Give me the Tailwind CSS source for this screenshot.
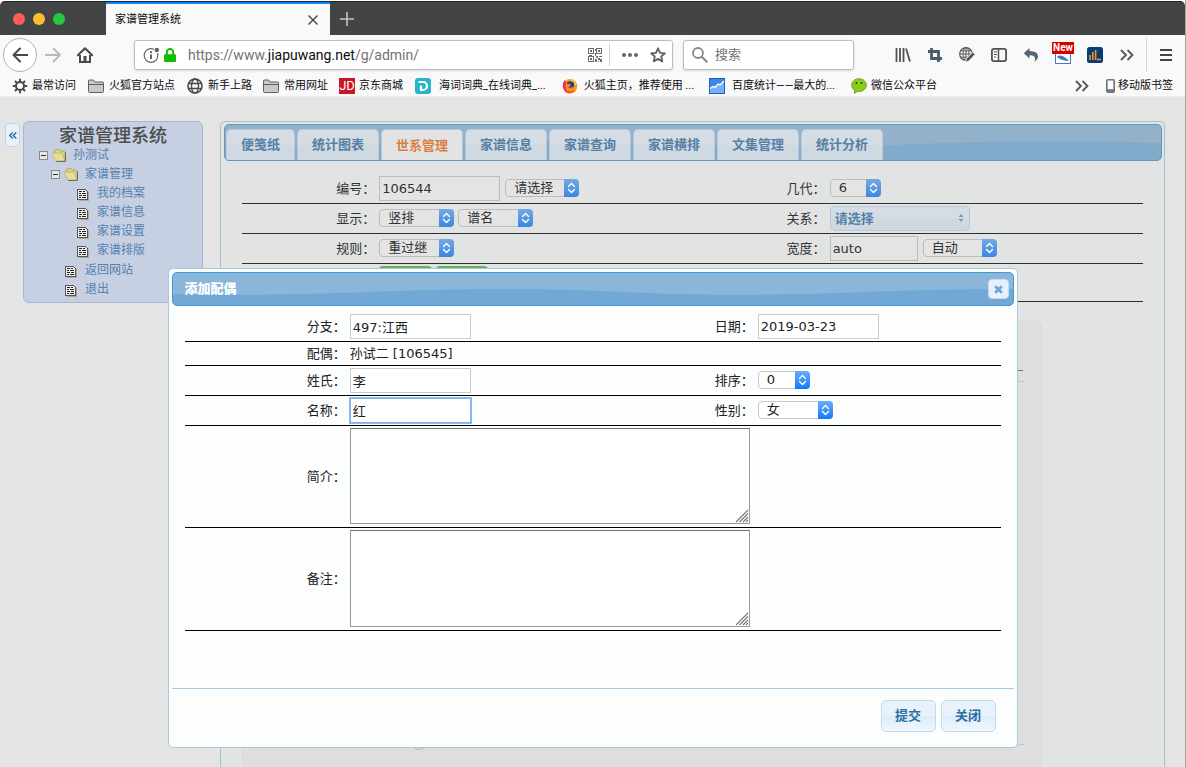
<!DOCTYPE html>
<html lang="zh-CN">
<head>
  <meta charset="UTF-8" />
  <meta name="viewport" content="width=device-width, initial-scale=1.0" />
  <title>家谱管理系统</title>
  <script src="https://cdn.jsdelivr.net/npm/@tailwindcss/browser@4"></script>
</head>
<body class="relative flex h-screen flex-col overflow-hidden border-r border-[#a3a3a3] bg-[#e4e4e4] font-['DejaVu_Sans','Noto_Sans_CJK_SC',sans-serif] text-[13px] leading-5 text-[#333]">

  <!-- Iconos compartidos -->
  <svg class="absolute size-0" aria-hidden="true">
    <defs>
      <symbol id="updown" viewBox="0 0 15 18">
        <path d="M4.5 7.5l3-3 3 3M4.5 10.5l3 3 3-3" fill="none" stroke="#fff" stroke-width="1.4" stroke-linecap="round" stroke-linejoin="round" />
      </symbol>
      <symbol id="minus" viewBox="0 0 9 9">
        <rect x=".5" y=".5" width="8" height="8" fill="#e6e6e6" stroke="#8a8a8a" />
        <path d="M2 4.5h5" stroke="#333" />
      </symbol>
      <symbol id="folder-open" viewBox="0 0 15 13">
        <path d="M2.500 1.500L4 .5h3l1.500 1.500h3.500l1 1v9H4z" fill="#d8d386" stroke="#a19c5a" stroke-width=".7" />
        <path d="M.5 4h9.500l3 8H4L1 7z" fill="#e4de96" stroke="#b9b367" stroke-width=".8" />
        <path d="M13.500 3.500v9H4.500" fill="none" stroke="#6c6b55" />
      </symbol>
      <symbol id="doc" viewBox="0 0 12 12">
        <g shape-rendering="crispEdges">
          <path d="M2 11.500h9.500V3" fill="none" stroke="#a8a894" />
          <path d="M.5.5h8l2 2v8h-10z" fill="#f0f0f0" stroke="#555" />
          <path d="M2 2.500h3M6 2.500h2M2 4.500h2M5 4.500h4M2 6.500h3M6 6.500h3M2 8.500h2M5 8.500h4" stroke="#222" />
        </g>
      </symbol>
      <symbol id="folder" viewBox="0 0 16 14">
        <path d="M.5 12.500V2q0-1 1-1h4l1.500 2h7.500q1 0 1 1v8.500q0 1-1 1h-13q-1 0-1-1z" fill="#c9c9cb" stroke="#606062" />
        <path d="M1 5.500h14" stroke="#606062" />
      </symbol>
      <symbol id="grip" viewBox="0 0 14 14">
        <path d="M1 13L13 1M4.500 13L13 4.500M8 13l5-5M11 13l2-2" stroke="#777" stroke-width="1.100" fill="none" />
      </symbol>
      <symbol id="more" viewBox="0 0 14 12">
        <path d="M1 1l5 5-5 5M7.500 1l5 5-5 5" fill="none" stroke="#555" stroke-width="1.800" />
      </symbol>
      <pattern id="wave" width="500" height="100" patternUnits="userSpaceOnUse">
        <path d="M0 21C40 22 90 22 130 21C200 19 260 16 330 16C400 16 450 19 500 21V100H0z" fill="#4b94cc" fill-opacity=".4" />
      </pattern>
    </defs>
  </svg>

  <!-- Barra de titulo -->
  <div class="bg-white pt-px">
    <div class="flex h-[34px] items-stretch rounded-t-[5px] border-t border-[#1f2222] bg-[#434446]">
      <div class="flex w-[106px] items-center gap-2 pl-[13px]">
        <span class="size-3 rounded-full bg-[#ff5c54]"></span>
        <span class="size-3 rounded-full bg-[#fdbd2e]"></span>
        <span class="size-3 rounded-full bg-[#27c83f]"></span>
      </div>
      <div class="flex w-[224px] items-center justify-between border-t-2 border-[#0a84ff] bg-[#f9f9fa] pr-3 pl-[9px] text-[11px] text-[#0c0c0d]">
        <span>家谱管理系统</span>
        <button type="button" aria-label="关闭标签页">
          <svg class="size-[10px]" viewBox="0 0 10 10"><path d="M.5.5l9 9M9.500.5l-9 9" stroke="#444" stroke-width="1.400" /></svg>
        </button>
      </div>
      <button type="button" aria-label="新标签页" class="pl-[10px]">
        <svg class="size-[14px]" viewBox="0 0 14 14"><path d="M7 0v14M0 7h14" stroke="#c4c4c5" stroke-width="1.600" /></svg>
      </button>
    </div>
  </div>

  <!-- Navegacion -->
  <div class="flex h-10 items-center bg-[#f9f9fa] pl-[3px]">
    <button type="button" aria-label="后退" class="flex size-[34px] items-center justify-center rounded-full border border-[#b1b1b3] bg-white">
      <svg class="size-4" viewBox="0 0 16 16"><path d="M15.500 8H1.500M8 1.500L1.500 8 8 14.500" fill="none" stroke="#48484a" stroke-width="2" stroke-linejoin="round" stroke-linecap="round" /></svg>
    </button>
    <button type="button" aria-label="前进" class="ml-2">
      <svg class="size-4" viewBox="0 0 16 16"><path d="M.5 8h14M8.500 1.500L15 8l-6.500 6.500" fill="none" stroke="#b9b9bb" stroke-width="1.800" stroke-linejoin="round" stroke-linecap="round" /></svg>
    </button>
    <button type="button" aria-label="主页" class="ml-4">
      <svg class="size-4" viewBox="0 0 16 16"><path d="M.8 8.300L8 1.200l7.200 7.100" fill="none" stroke="#48484a" stroke-width="2" stroke-linecap="round" stroke-linejoin="round" /><path d="M3 8v7h10V8" fill="none" stroke="#48484a" stroke-width="2" /><path d="M6.500 9h3v6h-3z" fill="#48484a" /></svg>
    </button>

    <div class="ml-[41px] flex h-[30px] min-w-0 flex-1 items-center rounded-[3px] border border-[#bcbcbe] bg-white shadow-sm">
      <svg class="ml-2 size-[17px] shrink-0" viewBox="0 0 17 17"><circle cx="8" cy="8.500" r="6.800" fill="none" stroke="#666" stroke-width="1.200" /><path d="M8 7.500v4.500" stroke="#555" stroke-width="1.800" /><circle cx="8" cy="5.200" r="1.100" fill="#555" /><circle cx="13.800" cy="3" r="3.200" fill="#fff" /><circle cx="13.800" cy="3" r="2.300" fill="#666" /></svg>
      <svg class="ml-1 h-[14px] w-3 shrink-0" viewBox="0 0 12 14"><path d="M2.800 7V4.200a3.200 3.200 0 016.400 0V7" fill="none" stroke="#12bc00" stroke-width="2" /><rect y="6.200" width="12" height="7.800" rx="1" fill="#12bc00" /></svg>
      <div class="ml-3 min-w-0 flex-1 truncate font-['Roboto',sans-serif] text-[14px] text-[#737373]">https://www.<span class="text-[#0c0c0d]">jiapuwang.net</span>/g/admin/</div>
      <svg class="size-[14px] shrink-0" viewBox="0 0 14 14" shape-rendering="crispEdges"><path d="M.5.5h5v5h-5zM8.500.5h5v5h-5zM.5 8.500h5v5h-5z" fill="none" stroke="#6b6b70" /><path d="M2 2h2v2H2zM10 2h2v2h-2zM2 10h2v2H2zM7 1h1v2H7zM7 5h1v3H7zM8 8h2v2H8zM11 8h3v1h-3zM10 10h2v2h-2zM12 11h2v3h-2zM7 11h2v3H7zM10 13h1v1h-1zM1 7h3v1H1z" fill="#6b6b70" /></svg>
      <span class="ml-[7px] h-[22px] w-px bg-[#d0d0d2]"></span>
      <svg class="ml-3 h-1 w-4 shrink-0" viewBox="0 0 16 4"><circle cx="2" cy="2" r="2" fill="#666" /><circle cx="8" cy="2" r="2" fill="#666" /><circle cx="14" cy="2" r="2" fill="#666" /></svg>
      <svg class="mr-[6px] ml-3 size-4 shrink-0" viewBox="0 0 16 16"><path d="M8 1.300l2 4.500 4.900.5-3.700 3.200 1.100 4.900L8 11.900l-4.300 2.500 1.100-4.900L1.100 6.300l4.900-.5z" fill="none" stroke="#606062" stroke-width="1.800" stroke-linejoin="round" /></svg>
    </div>

    <label class="ml-[10px] flex h-[30px] w-[171px] items-center rounded-[3px] border border-[#bcbcbe] bg-white pl-2 shadow-sm">
      <svg class="size-4 shrink-0" viewBox="0 0 16 16"><circle cx="6" cy="6" r="5" fill="none" stroke="#8a8a8c" stroke-width="1.800" /><path d="M9.800 9.800l5.500 5.500" stroke="#8a8a8c" stroke-width="2.200" /></svg>
      <input type="text" aria-label="搜索" placeholder="搜索" class="ml-[7px] w-full min-w-0 bg-transparent text-[13px] outline-none placeholder:text-[#757575]" />
    </label>

    <div class="ml-[33px] grid grid-cols-[repeat(8,32px)] place-items-center">
      <svg class="size-4" viewBox="0 0 16 16"><path d="M1.500 1v14M5 1v14M8.500 1v14M11 1.500l4 13" stroke="#525254" stroke-width="1.800" fill="none" /></svg>
      <svg class="size-4" viewBox="0 0 16 16"><path d="M4.500 1v10.500h10.500M1 4.500h10.500v10.500" fill="none" stroke="#4b5a6a" stroke-width="2.800" /></svg>
      <svg class="size-4" viewBox="0 0 16 16"><circle cx="7" cy="7" r="6.300" fill="none" stroke="#555" stroke-width="1.200" /><ellipse cx="7" cy="7" rx="3" ry="6.300" fill="none" stroke="#555" /><path d="M.7 7h12.500M1.800 3.800h10.400M1.800 10.200h8M7 .5v13" stroke="#555" /><path d="M14 4.500l-6.500 7-1.500 4 4-1.500 6-6.500z" fill="#555" stroke="#f9f9fa" /></svg>
      <svg class="size-4" viewBox="0 0 16 16"><rect x=".9" y="1.900" width="14.200" height="12.200" rx="2" fill="none" stroke="#525254" stroke-width="1.800" /><path d="M7.500 2v12" stroke="#525254" stroke-width="1.500" /><path d="M3 5h3M3 7.500h3M3 10h2" stroke="#525254" /></svg>
      <svg class="size-4" viewBox="0 0 16 16"><path d="M6.500 1L.8 6.200l5.700 5.300V8.400c4.500-.4 6.500 1.600 5 6.600 5.500-4 5-10.800-5-10.900z" fill="#566575" /></svg>
      <span class="flex w-6 flex-col items-center pb-[5px]">
        <span class="bg-[#d90000] px-px font-['Roboto',sans-serif] text-[10px] leading-3 font-bold text-white">New</span>
        <svg class="h-[10px] w-4" viewBox="0 0 16 10"><path d="M.5 0v9.500h15V0" fill="#fff" stroke="#3b7dba" /><path d="M2 2.500Q5 .5 8.500 2.500T14 7Q9 6.500 6 5.500T2 2.500z" fill="#3b7dba" /></svg>
      </span>
      <svg class="size-4" viewBox="0 0 16 16"><rect width="16" height="16" rx="2.500" fill="#0a3d78" /><path d="M3 13V8M5.800 13V5M8.600 13V3" stroke="#f39a1e" stroke-width="1.600" /><path d="M10 12.500h4" stroke="#f39a1e" stroke-width="1.500" /></svg>
      <svg class="h-3 w-[14px]"><use href="#more" /></svg>
    </div>
    <span class="ml-[3px] h-[34px] w-px bg-[#d8d8da]"></span>
    <button type="button" aria-label="菜单" class="mr-[13px] ml-[13px]">
      <svg class="h-3 w-3" viewBox="0 0 12 12"><path d="M0 1h12M0 6h12M0 11h12" stroke="#444" stroke-width="2" /></svg>
    </button>
  </div>

  <!-- Marcadores -->
  <div class="flex h-[22px] shrink-0 items-center border-b border-[#ececec] bg-[#f9f9fa] pl-3 font-['Roboto','Noto_Sans_CJK_SC',sans-serif] text-[11px] whitespace-nowrap text-[#0c0c0d]">
    <a href="#" class="mr-3 flex items-center gap-1">
      <svg class="size-4" viewBox="0 0 16 16"><circle cx="8" cy="8" r="4" fill="none" stroke="#48484a" stroke-width="2" /><path d="M8 .8v3M8 12.200v3M.8 8h3M12.200 8h3M2.900 2.900L5 5M11 11l2.100 2.100M2.900 13.100L5 11M11 5l2.100-2.100" stroke="#48484a" stroke-width="1.900" /></svg>最常访问</a>
    <a href="#" class="mr-3 flex items-center gap-[5px]"><svg class="h-[14px] w-4"><use href="#folder" /></svg>火狐官方站点</a>
    <a href="#" class="mr-[11px] flex items-center gap-[5px]">
      <svg class="size-4" viewBox="0 0 16 16"><circle cx="8" cy="8" r="7" fill="none" stroke="#48484a" stroke-width="1.600" /><ellipse cx="8" cy="8" rx="3.500" ry="7" fill="none" stroke="#48484a" stroke-width="1.300" /><path d="M1.500 5.500h13M1.500 10.500h13" stroke="#48484a" stroke-width="1.300" /></svg>新手上路</a>
    <a href="#" class="mr-[11px] flex items-center gap-[5px]"><svg class="h-[14px] w-4"><use href="#folder" /></svg>常用网址</a>
    <a href="#" class="mr-3 flex items-center gap-1">
      <span class="flex size-4 items-center justify-center bg-[#c91623] text-[13px] text-white">JD</span>京东商城</a>
    <a href="#" class="mr-4 flex items-center gap-2">
      <svg class="size-4" viewBox="0 0 16 16"><rect width="16" height="16" rx="3" fill="#27b5c9" /><path d="M3.500 4H8a4 4 0 010 8H6V7.500" fill="none" stroke="#fff" stroke-width="2.200" /></svg>海词词典_在线词典_...</a>
    <a href="#" class="mr-[15px] flex items-center gap-[6px]">
      <svg class="size-4" viewBox="0 0 16 16"><circle cx="8" cy="8.300" r="7.300" fill="#ff9a1f" /><path d="M1 5Q0 13 7 15.500 2 10 4 4L3 2z" fill="#f0246a" /><path d="M2 13q6 5 12-1l-5 1z" fill="#ff4b2e" /><path d="M8 1.500Q13 2 14 7l-1 1z" fill="#ffd83a" /><circle cx="8.300" cy="7.200" r="4" fill="#25408f" /><path d="M4 6q3-1 5 1-1 2-3 2 3 2 6-1-1 5-5 4-4-1-3-6z" fill="#ff8a16" /></svg>火狐主页，推荐使用 ...</a>
    <a href="#" class="mr-4 flex items-center gap-[7px]">
      <svg class="size-4" viewBox="0 0 16 16"><rect x=".5" y=".5" width="15" height="15" fill="#3f87e6" stroke="#1f5fc4" /><path d="M1 11l3-2 2 1 3-4 2 1 4-4v12H1z" fill="#77b0f5" /><path d="M1 10.500l3-2 2 1 3-3.500 2 1 4-4" fill="none" stroke="#fff" stroke-width="1.400" /></svg>百度统计——最大的...</a>
    <a href="#" class="flex items-center gap-1">
      <svg class="size-4" viewBox="0 0 16 16"><path d="M8 .7c4.200 0 7.300 2.900 7.300 6.500S12.200 13.500 8 13.500l-1.500-.1L3.500 15.300l.3-2.900C1.800 11.200.7 9.300.7 7.200.7 3.600 3.800.7 8 .7z" fill="#8ccb1d" stroke="#5c9311" stroke-width=".8" /><circle cx="5.500" cy="5" r="1" fill="#234" /><circle cx="10.500" cy="5" r="1" fill="#234" /></svg>微信公众平台</a>
    <span class="ml-auto"><svg class="h-3 w-[14px]"><use href="#more" /></svg></span>
    <a href="#" class="mr-3 ml-[17px] flex items-center gap-[3px]">
      <svg class="h-[14px] w-[9px]" viewBox="0 0 9 14"><rect x=".8" y=".8" width="7.400" height="12.400" rx="1.200" fill="#fff" stroke="#6d7278" stroke-width="1.600" /><path d="M1 11.500h7" stroke="#6d7278" stroke-width="2.500" /></svg>移动版书签</a>
  </div>

  <!-- Pagina -->
  <div class="flex min-h-0 flex-1 items-start overflow-hidden pt-6 pr-5 pl-[5px]">
    <button type="button" aria-label="收起" class="mt-[2px] flex h-6 w-[15px] items-center justify-center rounded border border-[#c0d6e8] bg-[#e6f1fb]">
      <svg class="h-[7px] w-2" viewBox="0 0 8 7"><path d="M3.800.5l-3 3 3 3M7.300.5l-3 3 3 3" fill="none" stroke="#2e6e9e" stroke-width="1.400" /></svg>
    </button>

    <aside class="ml-[3px] h-[182px] w-[180px] shrink-0 rounded-md border border-[#a1b8d9] bg-[#c6d0e2] pt-[3px]">
      <h1 class="text-center text-[18px] leading-[21px] font-medium text-[#4c4c4c]">家谱管理系统</h1>
      <ul class="pl-[15px] text-[12px] leading-[19px] text-[#5580b0]">
        <li>
          <a href="#" class="flex h-[19px] items-center"><svg class="mr-1 size-[9px]"><use href="#minus" /></svg><svg class="mr-[6px] h-[13px] w-[15px]"><use href="#folder-open" /></svg>孙测试</a>
          <ul class="pl-3">
            <li>
              <a href="#" class="flex h-[19px] items-center"><svg class="mr-1 size-[9px]"><use href="#minus" /></svg><svg class="mr-[6px] h-[13px] w-[15px]"><use href="#folder-open" /></svg>家谱管理</a>
              <ul class="pb-px pl-[26px]">
                <li><a href="#" class="flex h-[19px] items-center gap-2"><svg class="mt-[3px] size-3"><use href="#doc" /></svg>我的档案</a></li>
                <li><a href="#" class="flex h-[19px] items-center gap-2"><svg class="mt-[3px] size-3"><use href="#doc" /></svg>家谱信息</a></li>
                <li><a href="#" class="flex h-[19px] items-center gap-2"><svg class="mt-[3px] size-3"><use href="#doc" /></svg>家谱设置</a></li>
                <li><a href="#" class="flex h-[19px] items-center gap-2"><svg class="mt-[3px] size-3"><use href="#doc" /></svg>家谱排版</a></li>
              </ul>
            </li>
            <li><a href="#" class="flex h-[19px] items-center gap-2 pl-[14px]"><svg class="mt-[3px] size-3"><use href="#doc" /></svg>返回网站</a></li>
            <li><a href="#" class="flex h-[19px] items-center gap-2 pl-[14px]"><svg class="mt-[3px] size-3"><use href="#doc" /></svg>退出</a></li>
          </ul>
        </li>
      </ul>
    </aside>

    <main class="ml-[17px] min-w-0 flex-1 rounded-[5px] border border-[#a6bfd3] bg-[#e1e4e3] p-[2px] pl-[3px]">
      <!-- Pestañas -->
      <nav class="relative flex h-[37px] items-stretch gap-[2px] overflow-hidden rounded-[5px] border border-[#6396bd] bg-[#93b2ca] pt-1 pl-px text-[13px] font-bold text-[#5480a5]">
        <svg class="absolute inset-0 h-full w-full opacity-60"><rect width="100%" height="100%" fill="url(#wave)" /></svg>
        <a href="#" class="relative flex items-center rounded-t-[5px] border border-b-0 border-[#bccbda] bg-linear-to-b from-[#d6dce4] from-50% to-[#cfd9e2] to-50% px-[14px]">便笺纸</a>
        <a href="#" class="relative flex items-center rounded-t-[5px] border border-b-0 border-[#bccbda] bg-linear-to-b from-[#d6dce4] from-50% to-[#cfd9e2] to-50% px-[14px]">统计图表</a>
        <a href="#" class="relative -mb-px flex items-center rounded-t-[5px] border border-b-0 border-[#b0cadc] bg-[#e2e4e4] px-[14px] text-[#dc7d43]">世系管理</a>
        <a href="#" class="relative flex items-center rounded-t-[5px] border border-b-0 border-[#bccbda] bg-linear-to-b from-[#d6dce4] from-50% to-[#cfd9e2] to-50% px-[14px]">家谱信息</a>
        <a href="#" class="relative flex items-center rounded-t-[5px] border border-b-0 border-[#bccbda] bg-linear-to-b from-[#d6dce4] from-50% to-[#cfd9e2] to-50% px-[14px]">家谱查询</a>
        <a href="#" class="relative flex items-center rounded-t-[5px] border border-b-0 border-[#bccbda] bg-linear-to-b from-[#d6dce4] from-50% to-[#cfd9e2] to-50% px-[14px]">家谱横排</a>
        <a href="#" class="relative flex items-center rounded-t-[5px] border border-b-0 border-[#bccbda] bg-linear-to-b from-[#d6dce4] from-50% to-[#cfd9e2] to-50% px-[14px]">文集管理</a>
        <a href="#" class="relative flex items-center rounded-t-[5px] border border-b-0 border-[#bccbda] bg-linear-to-b from-[#d6dce4] from-50% to-[#cfd9e2] to-50% px-[14px]">统计分析</a>
      </nav>

      <div class="pt-[13px] pr-[19px] pl-[18px]">
        <table class="w-full table-fixed border-separate border-spacing-0">
          <colgroup><col class="w-[15%]" /><col class="w-[35%]" /><col class="w-[15%]" /><col class="w-[35%]" /></colgroup>
          <tbody>
            <tr class="h-[30px]">
              <td class="border-b border-[#2e2e2e] px-[2px] text-right"><label for="bianhao">编号：</label></td>
              <td class="border-b border-[#2e2e2e] px-[2px]">
                <div class="flex items-center gap-[5px]">
                  <input id="bianhao" type="text" value="106544" class="h-[25px] w-[121px] border border-[#bcbcbc] bg-[#e4e4e4] px-[2px]" />
                  <div class="relative mb-px h-[18px] w-[74px]">
                    <select aria-label="选择" class="block h-full w-full appearance-none rounded-[4px] border border-[#bdbdbd] bg-[#e4e4e4] pl-2 leading-4"><option>请选择</option></select>
                    <svg class="pointer-events-none absolute top-0 right-0 h-[18px] w-[15px] rounded-r-[4px] bg-linear-to-b from-[#75a9e0] to-[#3a86e3]"><use href="#updown" /></svg>
                  </div>
                </div>
              </td>
              <td class="border-b border-[#2e2e2e] px-[2px] text-right"><label for="jidai">几代：</label></td>
              <td class="border-b border-[#2e2e2e] px-[2px]">
                <div class="relative mb-px h-[18px] w-[51px]">
                  <select id="jidai" class="block h-full w-full appearance-none rounded-[4px] border border-[#bdbdbd] bg-[#e4e4e4] pl-2 leading-4"><option>6</option></select>
                  <svg class="pointer-events-none absolute top-0 right-0 h-[18px] w-[15px] rounded-r-[4px] bg-linear-to-b from-[#75a9e0] to-[#3a86e3]"><use href="#updown" /></svg>
                </div>
              </td>
            </tr>
            <tr class="h-[30px]">
              <td class="border-b border-[#2e2e2e] px-[2px] text-right"><label for="xianshi">显示：</label></td>
              <td class="border-b border-[#2e2e2e] px-[2px]">
                <div class="flex items-center gap-1">
                  <div class="relative mb-px h-[18px] w-[75px]">
                    <select id="xianshi" class="block h-full w-full appearance-none rounded-[4px] border border-[#bdbdbd] bg-[#e4e4e4] pl-2 leading-4"><option>竖排</option></select>
                    <svg class="pointer-events-none absolute top-0 right-0 h-[18px] w-[15px] rounded-r-[4px] bg-linear-to-b from-[#75a9e0] to-[#3a86e3]"><use href="#updown" /></svg>
                  </div>
                  <div class="relative mb-px h-[18px] w-[75px]">
                    <select aria-label="名称类型" class="block h-full w-full appearance-none rounded-[4px] border border-[#bdbdbd] bg-[#e4e4e4] pl-2 leading-4"><option>谱名</option></select>
                    <svg class="pointer-events-none absolute top-0 right-0 h-[18px] w-[15px] rounded-r-[4px] bg-linear-to-b from-[#75a9e0] to-[#3a86e3]"><use href="#updown" /></svg>
                  </div>
                </div>
              </td>
              <td class="border-b border-[#2e2e2e] px-[2px] text-right"><label for="guanxi">关系：</label></td>
              <td class="border-b border-[#2e2e2e] px-[2px]">
                <div class="relative h-[25px] w-[140px]">
                  <select id="guanxi" class="block h-full w-full appearance-none rounded-[4px] border border-[#b9c9d9] bg-linear-to-b from-[#d6dce4] from-50% to-[#cfd9e2] to-50% pl-1 font-bold text-[#5480a5]"><option>请选择</option></select>
                  <svg class="pointer-events-none absolute top-2 right-[6px] h-2 w-[6px]" viewBox="0 0 6 8"><path d="M3 0l2.500 3h-5zM3 8L.5 5h5z" fill="#6d9cc4" /></svg>
                </div>
              </td>
            </tr>
            <tr class="h-[30px]">
              <td class="border-b border-[#2e2e2e] px-[2px] text-right"><label for="guize">规则：</label></td>
              <td class="border-b border-[#2e2e2e] px-[2px]">
                <div class="relative mb-px h-[18px] w-[75px]">
                  <select id="guize" class="block h-full w-full appearance-none rounded-[4px] border border-[#bdbdbd] bg-[#e4e4e4] pl-2 leading-4"><option>重过继</option></select>
                  <svg class="pointer-events-none absolute top-0 right-0 h-[18px] w-[15px] rounded-r-[4px] bg-linear-to-b from-[#75a9e0] to-[#3a86e3]"><use href="#updown" /></svg>
                </div>
              </td>
              <td class="border-b border-[#2e2e2e] px-[2px] text-right"><label for="kuandu">宽度：</label></td>
              <td class="border-b border-[#2e2e2e] px-[2px]">
                <div class="flex items-center gap-[5px]">
                  <input id="kuandu" type="text" value="auto" class="h-[25px] w-[88px] border border-[#bcbcbc] bg-[#e4e4e4] px-[2px]" />
                  <div class="relative mb-px h-[18px] w-[74px]">
                    <select aria-label="宽度方式" class="block h-full w-full appearance-none rounded-[4px] border border-[#bdbdbd] bg-[#e4e4e4] pl-2 leading-4"><option>自动</option></select>
                    <svg class="pointer-events-none absolute top-0 right-0 h-[18px] w-[15px] rounded-r-[4px] bg-linear-to-b from-[#75a9e0] to-[#3a86e3]"><use href="#updown" /></svg>
                  </div>
                </div>
              </td>
            </tr>
            <tr class="h-[38px]">
              <td class="border-b border-[#2e2e2e]"></td>
              <td colspan="3" class="border-b border-[#2e2e2e] px-[2px]">
                <div class="flex gap-1">
                  <button type="button" aria-label="查询" class="h-[34px] w-[53px] rounded bg-[#64b05f]"></button>
                  <button type="button" aria-label="重置" class="h-[34px] w-[52px] rounded bg-[#64b05f]"></button>
                </div>
              </td>
            </tr>
          </tbody>
        </table>

        <!-- Area del arbol -->
        <div class="relative mt-[19px] h-[480px] max-w-[800px] rounded-[5px] border border-[#dadada] bg-[#dedede] pt-12">
          <div class="mr-[18px] h-px bg-[#777]"></div>
          <div class="mt-[10px] mr-4 h-[364px] border-y border-[#c4c4c4]"></div>
          <span class="absolute top-[412px] left-[168px] size-4 rounded-full border border-[#b5b5b5]"></span>
        </div>
      </div>
    </main>
  </div>

  <!-- Dialogo -->
  <div class="absolute inset-x-0 top-[268px] flex justify-center">
    <section role="dialog" aria-labelledby="dlg-title" class="w-[850px] rounded-[5px] border border-[#a6c9e2] bg-[#fcfdfd] p-[3px] text-[#222]">
      <header class="relative flex h-[34px] items-center justify-between overflow-hidden rounded-[5px] border border-[#4297d7] bg-[#8ab6da] pr-1 pl-3">
        <svg class="absolute inset-0 h-full w-full"><rect width="100%" height="100%" fill="url(#wave)" /></svg>
        <h2 id="dlg-title" class="relative text-[13px] font-black text-white">添加配偶</h2>
        <button type="button" aria-label="关闭对话框" class="relative flex h-5 w-[21px] items-center justify-center rounded border border-[#c5dbec] bg-[#e6f1fb]">
          <svg class="size-[9px]" viewBox="0 0 9 9"><path d="M1.200 1.200l6.600 6.600M7.800 1.200L1.200 7.800" stroke="#6da8d5" stroke-width="2.800" /></svg>
        </button>
      </header>

      <form class="px-[13px] pt-[6px] pb-[57px]">
        <table class="w-full table-fixed border-separate border-spacing-0">
          <colgroup><col class="w-[20%]" /><col class="w-[30%]" /><col class="w-[20%]" /><col class="w-[30%]" /></colgroup>
          <tbody>
            <tr class="h-[30px]">
              <td class="border-b border-black px-[2px] text-right"><label for="fenzhi">分支：</label></td>
              <td class="border-b border-black px-[2px]"><input id="fenzhi" type="text" value="497:江西" class="block h-[25px] w-[121px] border border-[#ccc] bg-white px-[2px]" /></td>
              <td class="border-b border-black px-[2px] text-right"><label for="riqi">日期：</label></td>
              <td class="border-b border-black px-[2px]"><input id="riqi" type="text" value="2019-03-23" class="block h-[25px] w-[121px] border border-[#ccc] bg-white px-[2px]" /></td>
            </tr>
            <tr class="h-6">
              <td class="border-b border-black px-[2px] text-right">配偶：</td>
              <td colspan="3" class="border-b border-black px-[2px]">孙试二 [106545]</td>
            </tr>
            <tr class="h-[30px]">
              <td class="border-b border-black px-[2px] text-right"><label for="xingshi">姓氏：</label></td>
              <td class="border-b border-black px-[2px]"><input id="xingshi" type="text" value="李" class="block h-[25px] w-[121px] border border-[#ccc] bg-white px-[2px]" /></td>
              <td class="border-b border-black px-[2px] text-right"><label for="paixu">排序：</label></td>
              <td class="border-b border-black px-[2px]">
                <div class="relative mb-px h-[18px] w-[52px]">
                  <select id="paixu" class="block h-full w-full appearance-none rounded-[4px] border border-[#c9c9c9] bg-white pl-2 leading-4"><option>0</option></select>
                  <svg class="pointer-events-none absolute top-0 right-0 h-[18px] w-[15px] rounded-r-[4px] bg-linear-to-b from-[#64adfa] to-[#0a78fb]"><use href="#updown" /></svg>
                </div>
              </td>
            </tr>
            <tr class="h-[30px]">
              <td class="border-b border-black px-[2px] text-right"><label for="mingcheng">名称：</label></td>
              <td class="border-b border-black px-[2px]"><input id="mingcheng" type="text" value="红" class="block h-[25px] w-[121px] border border-[#7db0ee] bg-white px-[2px] ring-1 ring-[#8fbcf2]" /></td>
              <td class="border-b border-black px-[2px] text-right"><label for="xingbie">性别：</label></td>
              <td class="border-b border-black px-[2px]">
                <div class="relative mb-px h-[18px] w-[75px]">
                  <select id="xingbie" class="block h-full w-full appearance-none rounded-[4px] border border-[#c9c9c9] bg-white pl-2 leading-4"><option>女</option></select>
                  <svg class="pointer-events-none absolute top-0 right-0 h-[18px] w-[15px] rounded-r-[4px] bg-linear-to-b from-[#64adfa] to-[#0a78fb]"><use href="#updown" /></svg>
                </div>
              </td>
            </tr>
            <tr class="h-[102px]">
              <td class="border-b border-black px-[2px] text-right"><label for="jianjie">简介：</label></td>
              <td colspan="3" class="border-b border-black px-[2px]">
                <div class="relative mb-px w-[400px]">
                  <textarea id="jianjie" class="block h-24 w-full resize-none border border-[#999] border-t-[#707070] bg-white"></textarea>
                  <svg class="pointer-events-none absolute right-px bottom-px size-[14px]"><use href="#grip" /></svg>
                </div>
              </td>
            </tr>
            <tr class="h-[103px]">
              <td class="border-b border-black px-[2px] text-right"><label for="beizhu">备注：</label></td>
              <td colspan="3" class="border-b border-black px-[2px]">
                <div class="relative mb-px w-[400px]">
                  <textarea id="beizhu" class="block h-[97px] w-full resize-none border border-[#999] border-t-[#707070] bg-white"></textarea>
                  <svg class="pointer-events-none absolute right-px bottom-px size-[14px]"><use href="#grip" /></svg>
                </div>
              </td>
            </tr>
          </tbody>
        </table>
      </form>

      <footer class="flex justify-end gap-[5px] border-t border-[#a6c9e2] pt-[11px] pr-[18px] pb-3 font-bold text-[#2e6e9e]">
        <button type="button" class="h-8 w-[55px] rounded-[5px] border border-[#c5dbec] bg-linear-to-b from-[#e7f2fc] from-50% via-[#dcecfa] via-50% to-[#f0f7fe]">提交</button>
        <button type="button" class="h-8 w-[55px] rounded-[5px] border border-[#c5dbec] bg-linear-to-b from-[#e7f2fc] from-50% via-[#dcecfa] via-50% to-[#f0f7fe]">关闭</button>
      </footer>
    </section>
  </div>
</body>
</html>
